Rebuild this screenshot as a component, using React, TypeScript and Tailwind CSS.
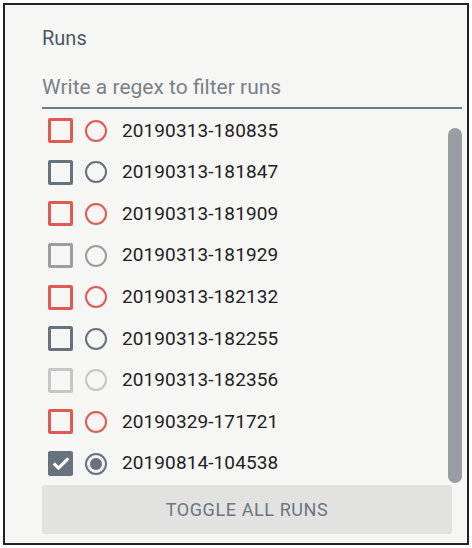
import { clsx } from 'clsx'

type Run = { name: string; tone: 'red' | 'slate' | 'gray' | 'light'; checked?: boolean }

const runs: Run[] = [
  { name: '20190313-180835', tone: 'red' },
  { name: '20190313-181847', tone: 'slate' },
  { name: '20190313-181909', tone: 'red' },
  { name: '20190313-181929', tone: 'gray' },
  { name: '20190313-182132', tone: 'red' },
  { name: '20190313-182255', tone: 'slate' },
  { name: '20190313-182356', tone: 'light' },
  { name: '20190329-171721', tone: 'red' },
  { name: '20190814-104538', tone: 'slate', checked: true },
]

function toneBorder(tone: Run['tone']): string {
  if (tone === 'red') return 'border-[#de5a53]'
  if (tone === 'slate') return 'border-[#66737e]'
  if (tone === 'gray') return 'border-[#9b9d9f]'
  return 'border-[#c6c6c6]'
}

function RunRow({ run }: { run: Run }) {
  return (
    <div className="flex items-center h-[41.6px]">
      <div
        className={clsx(
          'ml-[6px] w-[25px] h-[25px] rounded-[2px] flex items-center justify-center',
          run.checked ? 'bg-[#66737e]' : clsx('border-[3px]', toneBorder(run.tone))
        )}
      >
        {run.checked && (
          <svg width="20" height="20" viewBox="0 0 24 24" fill="none" stroke="white" strokeWidth="3.6" strokeLinecap="square">
            <path d="M4.5 12.5l4.5 4.5L19.5 6.5" />
          </svg>
        )}
      </div>
      <div
        className={clsx(
          'ml-[12px] w-[22px] h-[22px] rounded-full border-2 flex items-center justify-center',
          toneBorder(run.tone)
        )}
      >
        {run.checked && <div className="w-[12px] h-[12px] rounded-full bg-[#66737e]" />}
      </div>
      <span className="ml-[15px] text-[19px] text-[#222] tracking-[0.1px]">{run.name}</span>
    </div>
  )
}

export default function App() {
  return (
    <div className="w-[472px] h-[548px] bg-white p-[3px] font-['Roboto',sans-serif]">
      <div className="w-[466px] h-[542px] border-2 border-[#222] bg-[#f6f6f5] flex flex-col pl-[37px] pr-[5px]">
        <div className="mt-[19px] text-[20px] text-[#50585f] leading-[28px]">Runs</div>
        <div className="mt-[20px] border-b-2 border-[#6e7b88] pb-[5px] text-[21px] text-[#7b8186] leading-[30px]">
          Write a regex to filter runs
        </div>
        <div className="flex flex-1 min-h-0">
          <div className="flex-1 flex flex-col pt-[1px]">
            {runs.map((r) => (
              <RunRow key={r.name} run={r} />
            ))}
          </div>
          <div className="w-[14px] mt-[19px] mb-[2px] rounded-full bg-[#9a9ea2]" />
        </div>
        <button className="mr-[10px] mb-[9px] h-[49px] rounded-[3px] bg-[#e2e2e1] text-[18px] text-[#6c7680] tracking-[0.6px]">
          TOGGLE ALL RUNS
        </button>
      </div>
    </div>
  )
}
